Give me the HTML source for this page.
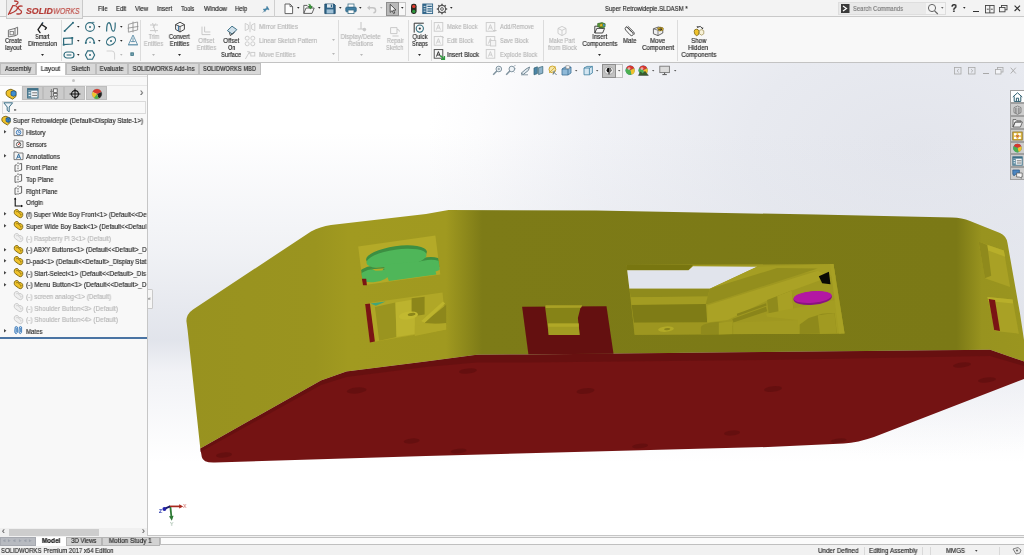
<!DOCTYPE html>
<html><head><meta charset="utf-8"><title>SOLIDWORKS</title>
<style>
*{margin:0;padding:0;box-sizing:border-box}
html,body{width:1024px;height:555px;overflow:hidden;background:#fff;font-family:"Liberation Sans",sans-serif;font-size:7px;color:#2a2a2a}
.a{position:absolute}
.t{position:absolute;white-space:nowrap;font-size:7px;line-height:9px;transform:scaleX(.9);transform-origin:0 50%}
.c{position:absolute;white-space:nowrap;font-size:7px;line-height:7.5px;text-align:center;transform:scaleX(.9);transform-origin:50% 50%}
.i{font-style:italic}
.t{-webkit-text-stroke:.18px currentColor;will-change:transform}
svg{position:absolute;overflow:visible}
</style></head><body>
<!-- viewport background -->
<div class="a" id="vp" style="left:148px;top:62px;width:876px;height:474px;background:linear-gradient(to bottom,rgba(222,225,233,0) 0,rgba(222,225,233,0) 70px,rgba(222,225,233,.45) 190px,rgba(222,225,233,.9) 278px,rgba(232,234,240,.6) 310px,rgba(255,255,255,0) 400px),radial-gradient(ellipse 490px 310px at 770px 85px,#e3e5ec 0%,#e8eaf0 35%,#f2f3f7 68%,#fcfcfd 90%,#fff 100%)"></div>
<!-- MODEL -->
<svg id="model" class="a" style="left:0;top:0" width="1024" height="555" viewBox="0 0 1024 555">
<defs>
<linearGradient id="gy" gradientUnits="userSpaceOnUse" x1="180" y1="0" x2="1024" y2="0">
<stop offset="0" stop-color="#98921f"/>
<stop offset="0.16" stop-color="#9a941f"/>
<stop offset="0.2" stop-color="#a19a20"/>
<stop offset="0.315" stop-color="#a09920"/>
<stop offset="0.358" stop-color="#7d7b17"/>
<stop offset="0.92" stop-color="#7b7916"/>
<stop offset="0.95" stop-color="#98931f"/>
<stop offset="1" stop-color="#9a951f"/>
</linearGradient>
</defs>
<!-- red base -->
<path d="M200.3 448.5 L321 380.4 L346.5 371.6 L426 361.5 L477 354.8 L528 354.5 L768 352 L990 349.7 L1024 361.5 L1024 379 L874 437 Q858 442.5 843.7 443.5 L768 447 L426 456 L215 462.5 Q203 463 201.8 457 Z" fill="#741313"/>
<!-- yellow body -->
<path d="M186.4 321 Q186.4 314 193 309.5 L311 231.5 Q320 226.5 331 225 L426 214 L448.5 210 L596 210.6 L816 214.6 L952 217.4 Q962 217.6 970 221 L1000 233 Q1006.5 236 1007.5 243 L1020 313.5 L1024 340 L1024 361.5 L990 349.7 L768 352 L528 354.5 L477 354.8 L426 361.5 L346.5 371.6 L321 380.4 L200.3 448.5 L187.6 330 Z" fill="url(#gy)"/>

<path d="M321 380.4 L346.5 371.6 L426 361.5 L477 354.8 L528 354.5 L768 352 L990 349.7 L1024 361.5 L1024 366 L990 356 L768 360 L528 362.5 L477 362.5 L426 367 L346.5 377 L321 385 L200.3 452 L200.3 448.5 Z" fill="#5f0f0f" opacity=".6"/>
<ellipse cx="468" cy="371" rx="9" ry="2.6" fill="#5a0d0d" opacity=".55" transform="rotate(-6 468 371)"/>
<ellipse cx="585.5" cy="391" rx="9" ry="2.8" fill="#5a0d0d" opacity=".55" transform="rotate(-6 585.5 391)"/>
<ellipse cx="773" cy="389" rx="9" ry="2.8" fill="#5a0d0d" opacity=".55" transform="rotate(-6 773 389)"/>
<ellipse cx="732" cy="433" rx="8" ry="2.5" fill="#5a0d0d" opacity=".55" transform="rotate(-6 732 433)"/>
<ellipse cx="640" cy="446" rx="8" ry="2.3" fill="#5a0d0d" opacity=".55" transform="rotate(-6 640 446)"/>
<ellipse cx="458.6" cy="451" rx="8" ry="2.3" fill="#5a0d0d" opacity=".55" transform="rotate(-6 458.6 451)"/>
<ellipse cx="411.7" cy="441" rx="8" ry="2.5" fill="#5a0d0d" opacity=".55" transform="rotate(-6 411.7 441)"/>
<ellipse cx="356.6" cy="390.5" rx="10" ry="3" fill="#5a0d0d" opacity=".55" transform="rotate(-6 356.6 390.5)"/>
<ellipse cx="224" cy="455" rx="8" ry="2.6" fill="#5a0d0d" opacity=".55" transform="rotate(-6 224 455)"/>
<ellipse cx="962" cy="365" rx="9" ry="2.5" fill="#5a0d0d" opacity=".55" transform="rotate(-6 962 365)"/>
<ellipse cx="987" cy="380" rx="9" ry="2.5" fill="#5a0d0d" opacity=".55" transform="rotate(-6 987 380)"/>
<ellipse cx="838.6" cy="440.5" rx="8" ry="2" fill="#5a0d0d" opacity=".55" transform="rotate(-6 838.6 440.5)"/>
<polygon points="358.2,246.4 435.4,235.6 440.3,274.5 363.0,285.3" fill="#b4aa28" />
<clipPath id="cw1"><polygon points="358.2,246.4 435.4,235.6 440.3,274.5 363.0,285.3"/></clipPath><g clip-path="url(#cw1)">
<ellipse cx="396.5" cy="255.7" rx="30.7" ry="9.5" fill="#3c8f42" transform="rotate(-8 396.5 255.7)" />
<ellipse cx="427.8" cy="263.7" rx="15.1" ry="6.5" fill="#3c8f42" transform="rotate(-6 427.8 263.7)" />
<ellipse cx="373.8" cy="272.3" rx="14.7" ry="6.5" fill="#3c8f42" transform="rotate(-6 373.8 272.3)" />
<ellipse cx="396.5" cy="258.7" rx="30.3" ry="9.1" fill="#4fb659" transform="rotate(-8 396.5 258.7)" />
<ellipse cx="428.2" cy="266.5" rx="15.1" ry="6.5" fill="#4fb659" transform="rotate(-6 428.2 266.5)" />
<ellipse cx="374.2" cy="275.5" rx="14.7" ry="6.5" fill="#4fb659" transform="rotate(-6 374.2 275.5)" />
<polygon points="382.4,264.7 432.1,260.4 436.4,274.5 388.9,281.0" fill="#4fb659" />
<polygon points="370.5,268.2 384.6,266.9 382.4,270.4 375.5,270.8" fill="#b4aa28" />
<polygon points="370.5,268.2 384.6,266.9 384.1,268.2 371.6,269.3" fill="#3c8f42" />
</g>
<polygon points="361.9,278.8 366.2,278.8 366.9,285.3 363.0,285.3" fill="#7a1414" />
<polygon points="365.1,303.6 442.5,292.4 446.2,329.6 369.9,342.5" fill="#b0a727" />
<polygon points="374.9,306.9 395.4,302.6 396.5,337.1 379.2,340.8" fill="#9a941f" />
<polygon points="395.4,302.6 414.8,299.3 414.8,333.9 396.5,337.1" fill="#bcb32e" />
<polygon points="411.6,298.2 424.6,296.7 424.6,314.4 411.6,316.6" fill="#8c861a" />
<polygon points="423.5,323.1 446.2,304.7 446.2,324.2" fill="#8d871b" />
<polygon points="414.8,325.7 446.2,323.1 446.2,329.6 414.8,336.1" fill="#b0a727" />
<polygon points="421.3,320.9 442.9,301.5 445.1,303.6 424.6,323.1" fill="#bdb42d" />
<ellipse cx="408.4" cy="315.5" rx="9.7" ry="3.9" fill="#c2b930" transform="rotate(-8 408.4 315.5)" />
<ellipse cx="411.6" cy="314.4" rx="3.9" ry="1.5" fill="#8c861a" transform="rotate(-8 411.6 314.4)" />
<polygon points="365.1,304.1 369.9,303.6 374.9,341.5 369.9,342.5" fill="#7a1414" />
<polygon points="370.5,303.6 385.7,301.5 375.9,305.8" fill="#3fa57a" />
<polygon points="522.1,306.7 606.5,306.2 613.5,353.7 528.4,354.3" fill="#641010" />
<polygon points="544.9,305.4 582.4,305.2 580.5,307.7 577.9,317.9 579.6,335.0 548.7,335.0" fill="#868317" />
<polygon points="545.5,305.2 582.1,305.2 581.1,307.7 545.8,307.9" fill="#a9a125" />
<polygon points="547.8,323.6 578.6,323.6 579.6,335.0 548.7,335.0" fill="#a29b22" />
<polygon points="548.1,323.6 578.6,323.6 578.7,326.7 548.2,326.7" fill="#b0a827" />
<polygon points="626.7,265.1 833.4,264.0 844.6,333.6 634.6,334.7" fill="#9f9821" />
<polygon points="626.7,265.1 693.0,265.1 688.5,270.3 627.2,270.3" fill="#787610" />
<polygon points="627.2,270.3 688.5,270.3 693.0,266.2 757.0,266.7 709.8,288.7 629.4,288.7" fill="#e1e4ec" />
<polygon points="629.4,288.7 709.8,288.7 707.6,296.6 630.8,297.2" fill="#8f8b1c" />
<polygon points="630.8,297.2 707.6,296.6 705.8,304.0 631.7,304.9" fill="#a39c22" />
<polygon points="631.7,304.9 705.8,304.0 707.2,322.4 633.9,322.8" fill="#7f7c16" />
<polygon points="633.9,322.8 707.2,322.4 732.3,320.1 733.4,334.1 634.8,334.7" fill="#9d9620" />
<polygon points="757.0,266.7 833.4,264.0 835.6,277.5 817.7,270.7 709.8,288.7" fill="#a59e23" />
<polygon points="709.8,288.7 777.2,268.0 817.7,268.5 707.6,304.0 705.8,304.0" fill="#938e1d" />
<polygon points="707.2,305.5 817.7,270.7 831.1,276.3 790.7,290.9 766.0,301.0 727.8,320.1 707.2,322.4" fill="#aaa225" />
<polygon points="732.3,319.0 766.0,306.7 767.1,311.2 733.4,322.4" fill="#8a851a" />
<polygon points="736.8,313.8 766.0,303.3 766.5,305.5 737.3,316.1" fill="#8a851a" />
<polygon points="767.1,299.9 791.8,290.5 793.4,310.0 768.7,313.8" fill="#8f8a1c" />
<polygon points="777.2,296.1 791.8,290.5 793.4,310.0 778.6,312.3" fill="#a8a024" />
<polygon points="733.4,322.4 799.7,320.1 799.7,334.1 733.4,334.1" fill="#a29b22" />
<polygon points="766.0,313.8 835.6,299.9 841.2,333.6 799.7,334.1 797.4,320.1 767.1,316.8" fill="#a49d22" />
<path d="M799.7,334.1 L799.7,324.6 L808.7,317.9 L822.2,313.8 L834.5,313.0 L836.8,333.6 Z" fill="#8e891b"/>
<polygon points="817.7,315.2 834.5,313.0 836.8,333.6 819.9,334.1" fill="#a19a21" />
<ellipse cx="716.6" cy="326.9" rx="15.7" ry="4.9" fill="#8f8a1c" transform="rotate(-3 716.6 326.9)" />
<polygon points="700.9,326.9 732.3,326.0 732.3,334.1 700.9,334.5" fill="#8f8a1c" />
<polygon points="718.8,322.4 732.3,321.5 732.3,334.1 718.8,334.5" fill="#a49d22" />
<ellipse cx="666.0" cy="329.1" rx="7.9" ry="2.7" fill="#b1a927" transform="rotate(-5 666.0 329.1)" />
<ellipse cx="667.2" cy="329.1" rx="3.1" ry="1.1" fill="#8a851a" transform="rotate(-5 667.2 329.1)" />
<polygon points="830.0,264.0 833.4,264.0 844.6,333.6 839.0,333.6" fill="#a8a124" />
<polygon points="818.8,276.3 828.9,271.8 830.5,284.2 822.2,283.3" fill="#0a0a05" />
<ellipse cx="812.7" cy="298.1" rx="19.3" ry="6.7" fill="#8a1380" transform="rotate(-5 812.7 298.1)" />
<ellipse cx="812.7" cy="297.0" rx="19.1" ry="5.8" fill="#b318a3" transform="rotate(-5 812.7 297.0)" />
<polygon points="978.6,241.6 1003.8,250.4 1010.1,287.0 984.9,278.2" fill="#a9a125" />
<polygon points="978.6,241.6 987.4,244.9 991.2,275.7 984.9,278.2" fill="#8f8a1c" />
<polygon points="987.4,244.9 1003.8,250.4 1005.1,256.7 988.2,250.4" fill="#b8af2a" />
<polygon points="987.4,297.1 1012.6,299.6 1018.9,333.7 995.0,331.1" fill="#a9a125" />
<polygon points="987.4,297.1 1012.6,299.6 1013.1,303.4 988.2,300.9" fill="#b8af2a" />
<polygon points="988.7,298.9 995.0,299.9 1000.0,331.1 994.2,330.1" fill="#7a1414" />
</svg>
<!-- title bar -->
<div class="a" style="left:0;top:0;width:1024px;height:17px;background:#f3f3f3"></div>
<!-- ribbon -->
<div class="a" style="left:0;top:16px;width:1024px;height:47px;background:#f8f8f8;border-top:1px solid #c9c9c9;border-bottom:1px solid #c9c9c9"></div>
<!-- tab row -->
<div class="a" id="tabs" style="left:0;top:63px;width:1024px;height:12px"></div>
<!-- left panel -->
<div class="a" id="panel" style="left:0;top:75px;width:148px;height:460px;background:#f7f7f7;border-right:1px solid #c8c8c8"></div>
<!-- bottom tabs -->
<div class="a" id="btabs" style="left:0;top:535px;width:1024px;height:10px;background:#f3f3f3;border-top:1px solid #c6c6c6"></div>
<!-- status -->
<div class="a" id="status" style="left:0;top:545px;width:1024px;height:10px;background:#f1f1f1;border-top:1px solid #d0d0d0"></div>
<!--CHROME-->
<div class="a" style="left:5.5px;top:0px;width:77.5px;height:18.5px;background:#ececec;border:1px solid #c9c9c9;border-top:none;"></div>
<svg style="left:7.3px;top:0.6px" width="18" height="15" viewBox="0 0 18 15"><path d="M1.5 13.4 L5.9 4.7 Q9.6 4.2 10.4 6.4 Q11 9.8 3.2 12.6 M7.6 0 Q11.4 .2 11 1.8 Q10.6 3 9.2 3.4 M15.1 5.1 Q11.6 4.6 11.2 6.4 Q11 8 13 9 Q15.4 10.2 14 12.2 Q12.6 13.4 9.8 12.8" fill="none" stroke="#b53c37" stroke-width="1.3" stroke-linecap="round"/></svg>
<span class="t i" style="left:26.0px;top:6.7px;transform:scaleX(1.044);color:#b53c37;font-weight:bold;font-size:8.4px">SOLID</span>
<span class="t i" style="left:52.8px;top:6.7px;transform:scaleX(0.844);color:#c0524c;font-size:8.4px">WORKS</span>
<span class="t " style="left:97.7px;top:3.9px;transform:scaleX(0.851);color:#2b2b2b">File</span>
<span class="t " style="left:116.0px;top:3.9px;transform:scaleX(0.854);color:#2b2b2b">Edit</span>
<span class="t " style="left:134.9px;top:3.9px;transform:scaleX(0.877);color:#2b2b2b">View</span>
<span class="t " style="left:156.8px;top:3.9px;transform:scaleX(0.868);color:#2b2b2b">Insert</span>
<span class="t " style="left:181.0px;top:3.9px;transform:scaleX(0.820);color:#2b2b2b">Tools</span>
<span class="t " style="left:203.5px;top:3.9px;transform:scaleX(0.928);color:#2b2b2b">Window</span>
<span class="t " style="left:235.4px;top:3.9px;transform:scaleX(0.861);color:#2b2b2b">Help</span>
<div class="a" style="left:274px;top:0px;width:1px;height:17px;background:#cfcfcf;"></div>
<span class="t " style="left:605.0px;top:3.9px;transform:scaleX(0.852);color:#2b2b2b">Super Retrowidepie.SLDASM *</span>
<div class="a" style="left:837.5px;top:2px;width:108.5px;height:13px;background:#e9e9e9;border:1px solid #dedede;"></div>
<div class="a" style="left:926px;top:3px;width:19px;height:11px;background:#f4f4f4;"></div>
<span class="t " style="left:852.5px;top:3.7px;transform:scaleX(0.835);color:#7d7d7d">Search Commands</span>
<span class="t " style="left:2.7px;top:36.0px;transform:scaleX(0.809);transform-origin:50% 50%;color:#2b2b2b">Create</span>
<span class="t " style="left:3.9px;top:43.0px;transform:scaleX(0.878);transform-origin:50% 50%;color:#2b2b2b">layout</span>
<span class="t " style="left:33.2px;top:32.0px;transform:scaleX(0.750);transform-origin:50% 50%;color:#2b2b2b">Smart</span>
<span class="t " style="left:26.0px;top:39.0px;transform:scaleX(0.877);transform-origin:50% 50%;color:#2b2b2b">Dimension</span>
<span class="t " style="left:146.6px;top:32.0px;transform:scaleX(0.765);transform-origin:50% 50%;color:#b8b8b8">Trim</span>
<span class="t " style="left:142.0px;top:39.0px;transform:scaleX(0.850);transform-origin:50% 50%;color:#b8b8b8">Entities</span>
<span class="t " style="left:167.2px;top:32.0px;transform:scaleX(0.857);transform-origin:50% 50%;color:#2b2b2b">Convert</span>
<span class="t " style="left:168.0px;top:39.0px;transform:scaleX(0.850);transform-origin:50% 50%;color:#2b2b2b">Entities</span>
<span class="t " style="left:196.7px;top:36.0px;transform:scaleX(0.863);transform-origin:50% 50%;color:#b8b8b8">Offset</span>
<span class="t " style="left:194.5px;top:43.0px;transform:scaleX(0.850);transform-origin:50% 50%;color:#b8b8b8">Entities</span>
<span class="t " style="left:222.2px;top:36.0px;transform:scaleX(0.863);transform-origin:50% 50%;color:#2b2b2b">Offset</span>
<span class="t " style="left:226.8px;top:43.0px;transform:scaleX(0.750);transform-origin:50% 50%;color:#2b2b2b">On</span>
<span class="t " style="left:219.4px;top:50.0px;transform:scaleX(0.829);transform-origin:50% 50%;color:#2b2b2b">Surface</span>
<span class="t " style="left:259.0px;top:21.5px;transform:scaleX(0.903);color:#b8b8b8">Mirror Entities</span>
<span class="t " style="left:259.0px;top:35.5px;transform:scaleX(0.862);color:#b8b8b8">Linear Sketch Pattern</span>
<span class="t " style="left:259.0px;top:49.5px;transform:scaleX(0.869);color:#b8b8b8">Move Entities</span>
<span class="t " style="left:338.4px;top:32.0px;transform:scaleX(0.886);transform-origin:50% 50%;color:#b8b8b8">Display/Delete</span>
<span class="t " style="left:346.4px;top:39.0px;transform:scaleX(0.857);transform-origin:50% 50%;color:#b8b8b8">Relations</span>
<span class="t " style="left:384.7px;top:36.0px;transform:scaleX(0.824);transform-origin:50% 50%;color:#b8b8b8">Repair</span>
<span class="t " style="left:384.3px;top:43.0px;transform:scaleX(0.818);transform-origin:50% 50%;color:#b8b8b8">Sketch</span>
<span class="t " style="left:410.6px;top:32.0px;transform:scaleX(0.838);transform-origin:50% 50%;color:#2b2b2b">Quick</span>
<span class="t " style="left:409.6px;top:39.0px;transform:scaleX(0.806);transform-origin:50% 50%;color:#2b2b2b">Snaps</span>
<span class="t " style="left:447.0px;top:21.5px;transform:scaleX(0.843);color:#b8b8b8">Make Block</span>
<span class="t " style="left:447.0px;top:35.5px;transform:scaleX(0.851);color:#b8b8b8">Edit Block</span>
<span class="t " style="left:447.0px;top:49.5px;transform:scaleX(0.875);color:#2b2b2b">Insert Block</span>
<span class="t " style="left:499.5px;top:21.5px;transform:scaleX(0.840);color:#b8b8b8">Add/Remove</span>
<span class="t " style="left:499.5px;top:35.5px;transform:scaleX(0.814);color:#b8b8b8">Save Block</span>
<span class="t " style="left:499.5px;top:49.5px;transform:scaleX(0.845);color:#b8b8b8">Explode Block</span>
<span class="t " style="left:546.1px;top:36.0px;transform:scaleX(0.815);transform-origin:50% 50%;color:#b8b8b8">Make Part</span>
<span class="t " style="left:545.5px;top:43.0px;transform:scaleX(0.877);transform-origin:50% 50%;color:#b8b8b8">from Block</span>
<span class="t " style="left:590.7px;top:32.0px;transform:scaleX(0.857);transform-origin:50% 50%;color:#2b2b2b">Insert</span>
<span class="t " style="left:579.7px;top:39.0px;transform:scaleX(0.882);transform-origin:50% 50%;color:#2b2b2b">Components</span>
<span class="t " style="left:621.7px;top:36.0px;transform:scaleX(0.868);transform-origin:50% 50%;color:#2b2b2b">Mate</span>
<span class="t " style="left:649.4px;top:36.0px;transform:scaleX(0.876);transform-origin:50% 50%;color:#2b2b2b">Move</span>
<span class="t " style="left:639.9px;top:43.0px;transform:scaleX(0.884);transform-origin:50% 50%;color:#2b2b2b">Component</span>
<span class="t " style="left:689.7px;top:36.0px;transform:scaleX(0.857);transform-origin:50% 50%;color:#2b2b2b">Show</span>
<span class="t " style="left:687.4px;top:43.0px;transform:scaleX(0.902);transform-origin:50% 50%;color:#2b2b2b">Hidden</span>
<span class="t " style="left:678.7px;top:50.0px;transform:scaleX(0.882);transform-origin:50% 50%;color:#2b2b2b">Components</span>
<div class="a" style="left:61px;top:20px;width:1px;height:41px;background:#dcdcdc;"></div>
<div class="a" style="left:140.2px;top:20px;width:1px;height:41px;background:#dcdcdc;"></div>
<div class="a" style="left:337.7px;top:20px;width:1px;height:41px;background:#dcdcdc;"></div>
<div class="a" style="left:407.5px;top:20px;width:1px;height:41px;background:#dcdcdc;"></div>
<div class="a" style="left:431.4px;top:20px;width:1px;height:41px;background:#dcdcdc;"></div>
<div class="a" style="left:542.8px;top:20px;width:1px;height:41px;background:#dcdcdc;"></div>
<div class="a" style="left:677px;top:20px;width:1px;height:41px;background:#dcdcdc;"></div>
<svg style="left:41.0px;top:53.9875px" width="3.0" height="2.0250000000000004" viewBox="0 0 3.0 2.0250000000000004"><polygon points="0,0 3.0,0 1.5,2.0250000000000004" fill="#2b2b2b"/></svg>
<svg style="left:152.0px;top:53.9875px" width="3.0" height="2.0250000000000004" viewBox="0 0 3.0 2.0250000000000004"><polygon points="0,0 3.0,0 1.5,2.0250000000000004" fill="#b8b8b8"/></svg>
<svg style="left:178.0px;top:53.9875px" width="3.0" height="2.0250000000000004" viewBox="0 0 3.0 2.0250000000000004"><polygon points="0,0 3.0,0 1.5,2.0250000000000004" fill="#2b2b2b"/></svg>
<svg style="left:359.5px;top:53.9875px" width="3.0" height="2.0250000000000004" viewBox="0 0 3.0 2.0250000000000004"><polygon points="0,0 3.0,0 1.5,2.0250000000000004" fill="#b8b8b8"/></svg>
<svg style="left:418.0px;top:53.9875px" width="3.0" height="2.0250000000000004" viewBox="0 0 3.0 2.0250000000000004"><polygon points="0,0 3.0,0 1.5,2.0250000000000004" fill="#2b2b2b"/></svg>
<svg style="left:598.0px;top:53.9875px" width="3.0" height="2.0250000000000004" viewBox="0 0 3.0 2.0250000000000004"><polygon points="0,0 3.0,0 1.5,2.0250000000000004" fill="#2b2b2b"/></svg>
<svg style="left:331.5px;top:38.9875px" width="3.0" height="2.0250000000000004" viewBox="0 0 3.0 2.0250000000000004"><polygon points="0,0 3.0,0 1.5,2.0250000000000004" fill="#b8b8b8"/></svg>
<svg style="left:331.5px;top:52.9875px" width="3.0" height="2.0250000000000004" viewBox="0 0 3.0 2.0250000000000004"><polygon points="0,0 3.0,0 1.5,2.0250000000000004" fill="#b8b8b8"/></svg>
<div class="a" style="left:0px;top:62.5px;width:260.5px;height:12.5px;background:#f3f3f3;"></div>
<div class="a" style="left:0px;top:63px;width:35.5px;height:11.5px;background:#d8d8d8;border:1px solid #bebebe;"></div>
<span class="t " style="left:2.6px;top:64.0px;transform:scaleX(0.873);transform-origin:50% 50%;color:#2b2b2b">Assembly</span>
<div class="a" style="left:36px;top:62px;width:29.5px;height:13px;background:#ffffff;border:1px solid #c4c4c4;border-bottom:none;border-top:none;"></div>
<span class="t " style="left:40.2px;top:64.0px;transform:scaleX(0.928);transform-origin:50% 50%;color:#2b2b2b">Layout</span>
<div class="a" style="left:66px;top:63px;width:29.5px;height:11.5px;background:#d8d8d8;border:1px solid #bebebe;"></div>
<span class="t " style="left:70.1px;top:64.0px;transform:scaleX(0.865);transform-origin:50% 50%;color:#2b2b2b">Sketch</span>
<div class="a" style="left:96px;top:63px;width:31.5px;height:11.5px;background:#d8d8d8;border:1px solid #bebebe;"></div>
<span class="t " style="left:98.1px;top:64.0px;transform:scaleX(0.881);transform-origin:50% 50%;color:#2b2b2b">Evaluate</span>
<div class="a" style="left:128px;top:63px;width:70.5px;height:11.5px;background:#d8d8d8;border:1px solid #bebebe;"></div>
<span class="t " style="left:126.7px;top:64.0px;transform:scaleX(0.848);transform-origin:50% 50%;color:#2b2b2b">SOLIDWORKS Add-Ins</span>
<div class="a" style="left:199px;top:63px;width:61.5px;height:11.5px;background:#d8d8d8;border:1px solid #bebebe;"></div>
<span class="t " style="left:197.3px;top:64.0px;transform:scaleX(0.816);transform-origin:50% 50%;color:#2b2b2b">SOLIDWORKS MBD</span>
<div class="a" style="left:0px;top:61.5px;width:1024px;height:1px;background:#c3c3c3;"></div>
<div class="a" style="left:0px;top:75px;width:147.5px;height:461px;background:#f8f8f8;"></div>
<div class="a" style="left:147.4px;top:75px;width:1px;height:461px;background:#c6c6c6;"></div>
<div class="a" style="left:0px;top:75.5px;width:147px;height:1px;background:#e3e3e3;"></div>
<div class="a" style="left:0px;top:85px;width:147px;height:1px;background:#e6e6e6;"></div>
<div class="a" style="left:72px;top:79px;width:2.5px;height:2.5px;background:#c4c4c4;border-radius:2px;"></div>
<div class="a" style="left:0px;top:86px;width:21px;height:14.5px;background:#fdfdfd;"></div>
<div class="a" style="left:21.5px;top:86px;width:21px;height:14px;background:#cbcbcb;border:1px solid #bdbdbd;"></div>
<div class="a" style="left:43px;top:86px;width:20.5px;height:14px;background:#cbcbcb;border:1px solid #bdbdbd;"></div>
<div class="a" style="left:64px;top:86px;width:20.5px;height:14px;background:#cbcbcb;border:1px solid #bdbdbd;"></div>
<div class="a" style="left:85.5px;top:86px;width:21px;height:14px;background:#cbcbcb;border:1px solid #bdbdbd;"></div>
<div class="a" style="left:1.5px;top:100.5px;width:144.5px;height:13px;background:#f8f8f8;border:1px solid #dadada;"></div>
<span class="t " style="left:140.0px;top:88.0px;transform:scaleX(0.875);color:#555;font-size:11px">›</span>
<svg style="left:4px;top:130.39999999999998px" width="2.4" height="3.6" viewBox="0 0 2.4 3.6"><polygon points="0,0 2.4,1.8 0,3.6" fill="#444"/></svg>
<svg style="left:4px;top:153.89999999999998px" width="2.4" height="3.6" viewBox="0 0 2.4 3.6"><polygon points="0,0 2.4,1.8 0,3.6" fill="#444"/></svg>
<svg style="left:4px;top:212.39999999999998px" width="2.4" height="3.6" viewBox="0 0 2.4 3.6"><polygon points="0,0 2.4,1.8 0,3.6" fill="#444"/></svg>
<svg style="left:4px;top:224.1px" width="2.4" height="3.6" viewBox="0 0 2.4 3.6"><polygon points="0,0 2.4,1.8 0,3.6" fill="#444"/></svg>
<svg style="left:4px;top:247.5px" width="2.4" height="3.6" viewBox="0 0 2.4 3.6"><polygon points="0,0 2.4,1.8 0,3.6" fill="#444"/></svg>
<svg style="left:4px;top:259.2px" width="2.4" height="3.6" viewBox="0 0 2.4 3.6"><polygon points="0,0 2.4,1.8 0,3.6" fill="#444"/></svg>
<svg style="left:4px;top:270.9px" width="2.4" height="3.6" viewBox="0 0 2.4 3.6"><polygon points="0,0 2.4,1.8 0,3.6" fill="#444"/></svg>
<svg style="left:4px;top:282.59999999999997px" width="2.4" height="3.6" viewBox="0 0 2.4 3.6"><polygon points="0,0 2.4,1.8 0,3.6" fill="#444"/></svg>
<svg style="left:4px;top:329.4px" width="2.4" height="3.6" viewBox="0 0 2.4 3.6"><polygon points="0,0 2.4,1.8 0,3.6" fill="#444"/></svg>
<svg style="left:5px;top:87.5px" width="12" height="12" viewBox="0 0 12 12"><path d="M1 5 Q1 2.6 3.2 2 L6 1.2 L10.8 3.4 L11 8.4 L7.6 11.2 L2.6 8.4 Q1 7.2 1 5 Z" fill="#f0c22a" stroke="#7a6410" stroke-width=".9"/><path d="M6 3.6 L8.6 2.8 L11 3.8 L11 7.2 L8.6 8.4 L6 7.2 Z" fill="#3f8fd0" stroke="#1f4f7f" stroke-width=".7"/></svg>
<svg style="left:26.5px;top:88px" width="12" height="11" viewBox="0 0 12 11"><rect x=".6" y=".6" width="10.4" height="9.4" fill="#f4f7f9" stroke="#3d6f86" stroke-width="1"/><rect x=".6" y=".6" width="10.4" height="2" fill="#3d6f86"/><rect x="1" y="2.6" width="3.2" height="7.4" fill="#5f8ba0"/><path d="M1.6 4.8 H3.6 M1.6 7.4 H3.6" stroke="#fff" stroke-width="1"/><path d="M5.2 4.8 H10 M5.2 7.4 H10" stroke="#666" stroke-width=".9"/></svg>
<svg style="left:48.5px;top:87.5px" width="10" height="12" viewBox="0 0 10 12"><path d="M2.4 1 V11 M1 3.4 H4 M1 8.6 H4" stroke="#777" stroke-width=".9" fill="none"/><rect x="4.6" y=".8" width="3.6" height="3.6" fill="#f4f4f4" stroke="#555" stroke-width=".8"/><rect x="4.6" y="5.4" width="3.6" height="2.6" fill="#f4f4f4" stroke="#555" stroke-width=".8"/><circle cx="6.8" cy="9.6" r="1.5" fill="#f4f4f4" stroke="#555" stroke-width=".8"/></svg>
<svg style="left:68.5px;top:87.5px" width="12" height="12" viewBox="0 0 12 12"><circle cx="6" cy="6" r="3.4" fill="none" stroke="#111" stroke-width="1.1"/><path d="M6 .6 V11.4 M.6 6 H11.4" stroke="#111" stroke-width="1"/></svg>
<svg style="left:90.5px;top:87.5px" width="12" height="12" viewBox="0 0 12 12"><circle cx="6" cy="6" r="4.8" fill="#e9e9e9" stroke="#777" stroke-width=".6"/><path d="M6 6 L1.6 4 A4.8 4.8 0 0 1 10.4 4 Z" fill="#d7382c"/><path d="M6 6 L10.4 4 A4.8 4.8 0 0 1 7.6 10.5 Z" fill="#222"/><path d="M6 6 L7.6 10.5 A4.8 4.8 0 0 1 1.6 4 Z" fill="#f0c22a"/><path d="M6 6 L3 10 A4.8 4.8 0 0 0 7.6 10.5 Z" fill="#4caf50"/></svg>
<svg style="left:2.5px;top:102px" width="14" height="11" viewBox="0 0 14 11"><path d="M.8 .8 H9.6 L6.2 5 V9.8 L4.2 8.4 V5 Z" fill="#eef4f8" stroke="#3d6f86" stroke-width="1"/><rect x="11" y="7.4" width="2.2" height="1.1" fill="#333"/></svg>
<svg style="left:1.2px;top:115.0px" width="10" height="11" viewBox="0 0 10 11"><path d="M.8 4.4 Q.8 2.4 2.6 1.8 L5 1.2 L9 3 L9.2 7.4 L6.4 10 L2.2 7.4 Q.8 6.4 .8 4.4 Z" fill="#f0c22a" stroke="#7a6410" stroke-width=".9"/><path d="M5 3.2 L7.2 2.4 L9.2 3.4 L9.2 6.4 L7.2 7.4 L5 6.4 Z" fill="#3f8fd0" stroke="#1f4f7f" stroke-width=".7"/><path d="M5 3.2 L7.2 4.2 L9.2 3.4 M7.2 4.2 V7.4" fill="none" stroke="#1f4f7f" stroke-width=".6"/></svg>
<span class="t " style="left:13.1px;top:116.4px;transform:scaleX(0.892);color:#2b2b2b">Super Retrowidepie  (Default&lt;Display State-1&gt;)</span>
<svg style="left:13px;top:126.39999999999999px" width="11" height="11" viewBox="0 0 11 11"><path d="M1 2 H4.2 L5 3 H10 V9.6 H1 Z" fill="#f4f4f4" stroke="#6e6e6e" stroke-width=".9"/><circle cx="5.6" cy="6.4" r="2.3" fill="#dfeaf6" stroke="#3b78b8" stroke-width=".9"/><path d="M5.6 5 V6.5 H6.8" fill="none" stroke="#3b78b8" stroke-width=".7"/></svg>
<span class="t " style="left:25.8px;top:128.1px;transform:scaleX(0.895);color:#2b2b2b">History</span>
<svg style="left:13px;top:138.2px" width="11" height="11" viewBox="0 0 11 11"><path d="M1 2 H4.2 L5 3 H10 V9.6 H1 Z" fill="#f4f4f4" stroke="#6e6e6e" stroke-width=".9"/><circle cx="5.6" cy="6.4" r="2.2" fill="#fff" stroke="#555" stroke-width=".9"/><path d="M5.6 6.4 L6.8 5" stroke="#c0392b" stroke-width=".9"/><circle cx="5.6" cy="6.4" r=".7" fill="#c0392b"/></svg>
<span class="t " style="left:25.8px;top:139.9px;transform:scaleX(0.798);color:#2b2b2b">Sensors</span>
<svg style="left:13px;top:149.89999999999998px" width="11" height="11" viewBox="0 0 11 11"><path d="M1 2 H4.2 L5 3 H10 V9.6 H1 Z" fill="#f4f4f4" stroke="#6e6e6e" stroke-width=".9"/><path d="M3.6 8.8 L5.6 4 L7.6 8.8 M4.4 7.2 H6.8" fill="none" stroke="#2f6c9d" stroke-width="1"/></svg>
<span class="t " style="left:25.8px;top:151.6px;transform:scaleX(0.920);color:#2b2b2b">Annotations</span>
<svg style="left:13px;top:161.6px" width="11" height="11" viewBox="0 0 11 11"><path d="M2 3.2 L3.8 2.8 M2 3.2 V9.4 L3.8 9 M6.2 2 L8.6 1.4 V8 L6.2 8.6" fill="none" stroke="#555" stroke-width=".9"/><path d="M5 .4 V10.8" stroke="#555" stroke-width=".9" stroke-dasharray="1.6 1"/></svg>
<span class="t " style="left:25.8px;top:163.3px;transform:scaleX(0.871);color:#2b2b2b">Front Plane</span>
<svg style="left:13px;top:173.29999999999998px" width="11" height="11" viewBox="0 0 11 11"><path d="M2 3.2 L3.8 2.8 M2 3.2 V9.4 L3.8 9 M6.2 2 L8.6 1.4 V8 L6.2 8.6" fill="none" stroke="#555" stroke-width=".9"/><path d="M5 .4 V10.8" stroke="#555" stroke-width=".9" stroke-dasharray="1.6 1"/></svg>
<span class="t " style="left:25.8px;top:175.0px;transform:scaleX(0.883);color:#2b2b2b">Top Plane</span>
<svg style="left:13px;top:185.0px" width="11" height="11" viewBox="0 0 11 11"><path d="M2 3.2 L3.8 2.8 M2 3.2 V9.4 L3.8 9 M6.2 2 L8.6 1.4 V8 L6.2 8.6" fill="none" stroke="#555" stroke-width=".9"/><path d="M5 .4 V10.8" stroke="#555" stroke-width=".9" stroke-dasharray="1.6 1"/></svg>
<span class="t " style="left:25.8px;top:186.7px;transform:scaleX(0.870);color:#2b2b2b">Right Plane</span>
<svg style="left:13px;top:196.7px" width="11" height="11" viewBox="0 0 11 11"><path d="M2.2 1 V9 H9" fill="none" stroke="#111" stroke-width="1.1"/><path d="M1 2.6 L2.2 .6 L3.4 2.6 Z M8 7.8 L10.2 9 L8 10.2 Z" fill="#111"/></svg>
<span class="t " style="left:25.8px;top:198.4px;transform:scaleX(0.910);color:#2b2b2b">Origin</span>
<svg style="left:13px;top:208.39999999999998px" width="11" height="11" viewBox="0 0 11 11"><path d="M1.2 4.2 Q1 2.2 3 1.6 Q5 1 5.6 2.8 L5.8 3.6 Q8.6 3 9.6 5.2 Q10.4 7.6 8.8 9.2 Q7.2 10.4 5.6 9 L2.4 6.8 Q1.2 5.8 1.2 4.2 Z" fill="#f0c22a" stroke="#7a6410" stroke-width=".9"/><path d="M3.2 3.8 Q4.4 3 5.4 4.2 L7.6 6 Q8.4 6.8 7.8 7.6" fill="none" stroke="#7a6410" stroke-width=".8"/></svg>
<span class="t " style="left:25.8px;top:210.1px;transform:scaleX(0.906);color:#2b2b2b">(f) Super Wide Boy Front&lt;1&gt; (Default&lt;&lt;De</span>
<svg style="left:13px;top:220.1px" width="11" height="11" viewBox="0 0 11 11"><path d="M1.2 4.2 Q1 2.2 3 1.6 Q5 1 5.6 2.8 L5.8 3.6 Q8.6 3 9.6 5.2 Q10.4 7.6 8.8 9.2 Q7.2 10.4 5.6 9 L2.4 6.8 Q1.2 5.8 1.2 4.2 Z" fill="#f0c22a" stroke="#7a6410" stroke-width=".9"/><path d="M3.2 3.8 Q4.4 3 5.4 4.2 L7.6 6 Q8.4 6.8 7.8 7.6" fill="none" stroke="#7a6410" stroke-width=".8"/></svg>
<span class="t " style="left:25.8px;top:221.8px;transform:scaleX(0.892);color:#2b2b2b">Super Wide Boy Back&lt;1&gt; (Default&lt;&lt;Defaul</span>
<svg style="left:13px;top:231.79999999999998px" width="11" height="11" viewBox="0 0 11 11"><path d="M1.2 4.2 Q1 2.2 3 1.6 Q5 1 5.6 2.8 L5.8 3.6 Q8.6 3 9.6 5.2 Q10.4 7.6 8.8 9.2 Q7.2 10.4 5.6 9 L2.4 6.8 Q1.2 5.8 1.2 4.2 Z" fill="#efefef" stroke="#c6c6c6" stroke-width=".9"/><path d="M3.2 3.8 Q4.4 3 5.4 4.2 L7.6 6 Q8.4 6.8 7.8 7.6" fill="none" stroke="#c6c6c6" stroke-width=".8"/></svg>
<span class="t " style="left:25.8px;top:233.5px;transform:scaleX(0.885);color:#b8b8b8">(-) Raspberry Pi 3&lt;1&gt; (Default)</span>
<svg style="left:13px;top:243.5px" width="11" height="11" viewBox="0 0 11 11"><path d="M1.2 4.2 Q1 2.2 3 1.6 Q5 1 5.6 2.8 L5.8 3.6 Q8.6 3 9.6 5.2 Q10.4 7.6 8.8 9.2 Q7.2 10.4 5.6 9 L2.4 6.8 Q1.2 5.8 1.2 4.2 Z" fill="#f0c22a" stroke="#7a6410" stroke-width=".9"/><path d="M3.2 3.8 Q4.4 3 5.4 4.2 L7.6 6 Q8.4 6.8 7.8 7.6" fill="none" stroke="#7a6410" stroke-width=".8"/></svg>
<span class="t " style="left:25.8px;top:245.2px;transform:scaleX(0.895);color:#2b2b2b">(-) ABXY Buttons&lt;1&gt; (Default&lt;&lt;Default&gt;_D</span>
<svg style="left:13px;top:255.2px" width="11" height="11" viewBox="0 0 11 11"><path d="M1.2 4.2 Q1 2.2 3 1.6 Q5 1 5.6 2.8 L5.8 3.6 Q8.6 3 9.6 5.2 Q10.4 7.6 8.8 9.2 Q7.2 10.4 5.6 9 L2.4 6.8 Q1.2 5.8 1.2 4.2 Z" fill="#f0c22a" stroke="#7a6410" stroke-width=".9"/><path d="M3.2 3.8 Q4.4 3 5.4 4.2 L7.6 6 Q8.4 6.8 7.8 7.6" fill="none" stroke="#7a6410" stroke-width=".8"/></svg>
<span class="t " style="left:25.8px;top:256.9px;transform:scaleX(0.904);color:#2b2b2b">D-pad&lt;1&gt; (Default&lt;&lt;Default&gt;_Display Stat</span>
<svg style="left:13px;top:266.9px" width="11" height="11" viewBox="0 0 11 11"><path d="M1.2 4.2 Q1 2.2 3 1.6 Q5 1 5.6 2.8 L5.8 3.6 Q8.6 3 9.6 5.2 Q10.4 7.6 8.8 9.2 Q7.2 10.4 5.6 9 L2.4 6.8 Q1.2 5.8 1.2 4.2 Z" fill="#f0c22a" stroke="#7a6410" stroke-width=".9"/><path d="M3.2 3.8 Q4.4 3 5.4 4.2 L7.6 6 Q8.4 6.8 7.8 7.6" fill="none" stroke="#7a6410" stroke-width=".8"/></svg>
<span class="t " style="left:25.8px;top:268.6px;transform:scaleX(0.906);color:#2b2b2b">(-) Start-Select&lt;1&gt; (Default&lt;&lt;Default&gt;_Dis</span>
<svg style="left:13px;top:278.59999999999997px" width="11" height="11" viewBox="0 0 11 11"><path d="M1.2 4.2 Q1 2.2 3 1.6 Q5 1 5.6 2.8 L5.8 3.6 Q8.6 3 9.6 5.2 Q10.4 7.6 8.8 9.2 Q7.2 10.4 5.6 9 L2.4 6.8 Q1.2 5.8 1.2 4.2 Z" fill="#f0c22a" stroke="#7a6410" stroke-width=".9"/><path d="M3.2 3.8 Q4.4 3 5.4 4.2 L7.6 6 Q8.4 6.8 7.8 7.6" fill="none" stroke="#7a6410" stroke-width=".8"/></svg>
<span class="t " style="left:25.8px;top:280.3px;transform:scaleX(0.923);color:#2b2b2b">(-) Menu Button&lt;1&gt; (Default&lt;&lt;Default&gt;_D</span>
<svg style="left:13px;top:290.3px" width="11" height="11" viewBox="0 0 11 11"><path d="M1.2 4.2 Q1 2.2 3 1.6 Q5 1 5.6 2.8 L5.8 3.6 Q8.6 3 9.6 5.2 Q10.4 7.6 8.8 9.2 Q7.2 10.4 5.6 9 L2.4 6.8 Q1.2 5.8 1.2 4.2 Z" fill="#efefef" stroke="#c6c6c6" stroke-width=".9"/><path d="M3.2 3.8 Q4.4 3 5.4 4.2 L7.6 6 Q8.4 6.8 7.8 7.6" fill="none" stroke="#c6c6c6" stroke-width=".8"/></svg>
<span class="t " style="left:25.8px;top:292.0px;transform:scaleX(0.907);color:#b8b8b8">(-) screen analog&lt;1&gt; (Default)</span>
<svg style="left:13px;top:302.0px" width="11" height="11" viewBox="0 0 11 11"><path d="M1.2 4.2 Q1 2.2 3 1.6 Q5 1 5.6 2.8 L5.8 3.6 Q8.6 3 9.6 5.2 Q10.4 7.6 8.8 9.2 Q7.2 10.4 5.6 9 L2.4 6.8 Q1.2 5.8 1.2 4.2 Z" fill="#efefef" stroke="#c6c6c6" stroke-width=".9"/><path d="M3.2 3.8 Q4.4 3 5.4 4.2 L7.6 6 Q8.4 6.8 7.8 7.6" fill="none" stroke="#c6c6c6" stroke-width=".8"/></svg>
<span class="t " style="left:25.8px;top:303.7px;transform:scaleX(0.920);color:#b8b8b8">(-) Shoulder Button&lt;3&gt; (Default)</span>
<svg style="left:13px;top:313.7px" width="11" height="11" viewBox="0 0 11 11"><path d="M1.2 4.2 Q1 2.2 3 1.6 Q5 1 5.6 2.8 L5.8 3.6 Q8.6 3 9.6 5.2 Q10.4 7.6 8.8 9.2 Q7.2 10.4 5.6 9 L2.4 6.8 Q1.2 5.8 1.2 4.2 Z" fill="#efefef" stroke="#c6c6c6" stroke-width=".9"/><path d="M3.2 3.8 Q4.4 3 5.4 4.2 L7.6 6 Q8.4 6.8 7.8 7.6" fill="none" stroke="#c6c6c6" stroke-width=".8"/></svg>
<span class="t " style="left:25.8px;top:315.4px;transform:scaleX(0.920);color:#b8b8b8">(-) Shoulder Button&lt;4&gt; (Default)</span>
<svg style="left:13px;top:325.4px" width="11" height="11" viewBox="0 0 11 11"><path d="M2.2 2 Q3.4 1 4.4 2 V7.4 Q3.4 9.6 2 8 Q1.4 7 2.2 2 Z M6.4 2 Q7.6 1 8.6 2 V7.4 Q7.6 9.6 6.2 8 Q5.6 7 6.4 2 Z" fill="#bcd6ee" stroke="#3b78b8" stroke-width=".9"/><path d="M3.3 3 V7 M7.5 3 V7" stroke="#3b78b8" stroke-width=".7"/></svg>
<span class="t " style="left:25.8px;top:327.1px;transform:scaleX(0.866);color:#2b2b2b">Mates</span>
<div class="a" style="left:0px;top:337.3px;width:147.4px;height:1.7px;background:#4a74a3;"></div>
<div class="a" style="left:148.2px;top:289.2px;width:4.5px;height:19.8px;background:#f6f6f6;border:1px solid #c9c9c9;border-left:none;border-radius:0 1.5px 1.5px 0;"></div>
<span class="t " style="left:148.3px;top:294.3px;transform:scaleX(0.875);color:#888;font-size:5px">«</span>
<div class="a" style="left:0px;top:528px;width:147px;height:8px;background:#f0f0f0;"></div>
<div class="a" style="left:9px;top:528.5px;width:89.5px;height:7px;background:#cdcdcd;"></div>
<span class="t " style="left:2.0px;top:526.8px;transform:scaleX(0.875);color:#444;font-size:9px">‹</span>
<span class="t " style="left:142.0px;top:526.8px;transform:scaleX(0.875);color:#444;font-size:9px">›</span>
<div class="a" style="left:0px;top:536px;width:1024px;height:10px;background:#f1f1f1;"></div>
<div class="a" style="left:159.5px;top:536.5px;width:864.5px;height:8.5px;background:#fbfbfb;border:1px solid #bfbfbf;border-right:none;"></div>
<div class="a" style="left:0px;top:536.5px;width:35.5px;height:9px;background:#b7bac0;border:1px solid #a6a9b0;"></div>
<div class="a" style="left:36px;top:536.5px;width:29.5px;height:9.5px;background:#ffffff;"></div>
<div class="a" style="left:66px;top:537px;width:35.5px;height:8.5px;background:#d2d2d2;border:1px solid #b5b5b5;"></div>
<div class="a" style="left:102px;top:537px;width:57.5px;height:8.5px;background:#d2d2d2;border:1px solid #b5b5b5;"></div>
<span class="t " style="left:40.6px;top:536.2px;transform:scaleX(0.915);transform-origin:50% 50%;color:#111;font-weight:bold">Model</span>
<span class="t " style="left:69.0px;top:536.2px;transform:scaleX(0.849);transform-origin:50% 50%;color:#2b2b2b">3D Views</span>
<span class="t " style="left:107.2px;top:536.2px;transform:scaleX(0.921);transform-origin:50% 50%;color:#2b2b2b">Motion Study 1</span>
<span class="t " style="left:3.0px;top:536.0px;transform:scaleX(0.875);color:#9aa0aa;font-size:5px">◂</span>
<span class="t " style="left:8.2px;top:536.0px;transform:scaleX(0.875);color:#9aa0aa;font-size:5px">▸</span>
<span class="t " style="left:13.4px;top:536.0px;transform:scaleX(0.875);color:#9aa0aa;font-size:5px">◂</span>
<span class="t " style="left:18.6px;top:536.0px;transform:scaleX(0.875);color:#9aa0aa;font-size:5px">▸</span>
<span class="t " style="left:23.8px;top:536.0px;transform:scaleX(0.875);color:#9aa0aa;font-size:5px">◂</span>
<span class="t " style="left:29.0px;top:536.0px;transform:scaleX(0.875);color:#9aa0aa;font-size:5px">▸</span>
<div class="a" style="left:0px;top:546px;width:1024px;height:9px;background:#f1f1f1;"></div>
<span class="t " style="left:0.5px;top:545.5px;transform:scaleX(0.856);color:#2b2b2b">SOLIDWORKS Premium 2017 x64 Edition</span>
<span class="t " style="left:818.4px;top:545.5px;transform:scaleX(0.897);color:#2b2b2b">Under Defined</span>
<span class="t " style="left:868.6px;top:545.5px;transform:scaleX(0.910);color:#2b2b2b">Editing Assembly</span>
<span class="t " style="left:946.0px;top:545.5px;transform:scaleX(0.873);color:#2b2b2b">MMGS</span>
<div class="a" style="left:864px;top:547px;width:1px;height:8px;background:#d9d9d9;"></div>
<div class="a" style="left:922px;top:547px;width:1px;height:8px;background:#d9d9d9;"></div>
<div class="a" style="left:930px;top:547px;width:1px;height:8px;background:#d9d9d9;"></div>
<div class="a" style="left:999px;top:547px;width:1px;height:8px;background:#d9d9d9;"></div>
<svg style="left:975.2px;top:549.9224999999999px" width="2.6" height="1.7550000000000001" viewBox="0 0 2.6 1.7550000000000001"><polygon points="0,0 2.6,0 1.3,1.7550000000000001" fill="#444"/></svg>
<svg style="left:1012px;top:546px" width="10" height="9" viewBox="0 0 10 9"><path d="M1 3 L6 1.5 L9 4 L8 7 L4 8 Z" fill="#e8e8e8" stroke="#666" stroke-width=".8"/><circle cx="5" cy="4.5" r="1" fill="#666"/></svg>
<svg style="left:954px;top:67px" width="8" height="8" viewBox="0 0 8 8"><rect x=".5" y=".5" width="6.5" height="6.5" fill="none" stroke="#a8a8a8" stroke-width=".8"/><path d="M4.8 2.2 L3 3.8 L4.8 5.4" fill="none" stroke="#a8a8a8" stroke-width=".8"/></svg>
<svg style="left:968px;top:67px" width="8" height="8" viewBox="0 0 8 8"><rect x=".5" y=".5" width="6.5" height="6.5" fill="none" stroke="#a8a8a8" stroke-width=".8"/><path d="M3 2.2 L4.8 3.8 L3 5.4" fill="none" stroke="#a8a8a8" stroke-width=".8"/></svg>
<div class="a" style="left:983px;top:72.5px;width:5.5px;height:1.3px;background:#a8a8a8;"></div>
<svg style="left:995px;top:67px" width="9" height="8" viewBox="0 0 9 8"><rect x="2.5" y=".5" width="5.5" height="4.5" fill="none" stroke="#a8a8a8" stroke-width=".8"/><rect x=".5" y="2.5" width="5.5" height="4.5" fill="#f4f5f8" stroke="#a8a8a8" stroke-width=".8"/></svg>
<svg style="left:1010px;top:67px" width="7" height="8" viewBox="0 0 7 8"><path d="M.7 .7 L5.8 6.5 M5.8 .7 L.7 6.5" stroke="#a8a8a8" stroke-width=".9"/></svg>
<div class="a" style="left:1009.5px;top:90.3px;width:15px;height:12.700000000000003px;background:#ffffff;border:1px solid #9f9f9f;"></div>
<svg style="left:1011.5px;top:91.8px" width="11" height="10" viewBox="0 0 11 10"><path d="M.8 5 L5.5 .8 L10.2 5 M2.2 4.4 V9.4 H8.8 V4.4 M4.4 9.4 V6.2 H6.6 V9.4" fill="#fff" stroke="#2f5f70" stroke-width="1"/></svg>
<div class="a" style="left:1009.5px;top:103px;width:15px;height:13px;background:#cdcdcd;border:1px solid #9f9f9f;"></div>
<svg style="left:1011.5px;top:104.5px" width="11" height="10" viewBox="0 0 11 10"><path d="M2 2.6 L5.6 1 L9 2.6 V7.6 L5.6 9.4 L2 7.6 Z M3.4 2.8 V8 M4.8 2.4 V8.8 M6.4 2.4 V8.8 M7.8 2.8 V8" fill="#e4e4e4" stroke="#666" stroke-width=".7"/></svg>
<div class="a" style="left:1009.5px;top:116px;width:15px;height:13px;background:#cdcdcd;border:1px solid #9f9f9f;"></div>
<svg style="left:1011.5px;top:117.5px" width="11" height="10" viewBox="0 0 11 10"><path d="M1 9 V1.6 H4 L5 2.8 H9 V4 H3.2 Z M1 9 L3.2 4 H10.4 L8.4 9 Z" fill="#f1f1f1" stroke="#555" stroke-width=".8"/></svg>
<div class="a" style="left:1009.5px;top:129px;width:15px;height:12.5px;background:#cdcdcd;border:1px solid #9f9f9f;"></div>
<svg style="left:1011.5px;top:130.5px" width="11" height="10" viewBox="0 0 11 10"><rect x=".8" y="1" width="9.4" height="8" fill="#e8c24a" stroke="#8a6d1a" stroke-width=".8"/><rect x="2" y="2.2" width="2.6" height="2.2" fill="#fff"/><rect x="6.2" y="2.2" width="2.6" height="2.2" fill="#fff"/><rect x="2" y="5.8" width="2.6" height="2.2" fill="#fff"/><rect x="6.2" y="5.8" width="2.6" height="2.2" fill="#fff"/><path d="M4 4 L7 6.4 M7 4 L4 6.4" stroke="#c0392b" stroke-width=".7"/></svg>
<div class="a" style="left:1009.5px;top:141.5px;width:15px;height:12.5px;background:#cdcdcd;border:1px solid #9f9f9f;"></div>
<svg style="left:1011.5px;top:143.0px" width="11" height="10" viewBox="0 0 11 10"><circle cx="5.5" cy="5" r="4.3" fill="#3d7fd0"/><path d="M5.5 5 L1.6 3.2 A4.3 4.3 0 0 1 9.4 3.2 Z" fill="#d7382c"/><path d="M5.5 5 L9.4 3.2 A4.3 4.3 0 0 1 6.6 9.2 Z" fill="#f0c22a"/><path d="M5.5 5 L6.6 9.2 A4.3 4.3 0 0 1 1.6 3.2 Z" fill="#4caf50"/></svg>
<div class="a" style="left:1009.5px;top:154px;width:15px;height:13px;background:#cdcdcd;border:1px solid #9f9f9f;"></div>
<svg style="left:1011.5px;top:155.5px" width="11" height="10" viewBox="0 0 11 10"><rect x=".8" y=".8" width="9.4" height="8.4" fill="#f4f7f9" stroke="#3d6f86" stroke-width=".9"/><rect x=".8" y=".8" width="9.4" height="1.8" fill="#3d6f86"/><rect x="1" y="2.6" width="2.8" height="6.4" fill="#5f8ba0"/><path d="M1.6 4.6 H3.2 M1.6 6.8 H3.2" stroke="#fff" stroke-width=".9"/><path d="M4.8 4.8 H9.4 M4.8 7 H9.4" stroke="#555" stroke-width=".8"/></svg>
<div class="a" style="left:1009.5px;top:167px;width:15px;height:12.5px;background:#cdcdcd;border:1px solid #9f9f9f;"></div>
<svg style="left:1011.5px;top:168.5px" width="11" height="10" viewBox="0 0 11 10"><path d="M.8 1 H7.4 V5.4 H3.4 L1.8 7 V5.4 H.8 Z" fill="#4d86c0" stroke="#2a5a8a" stroke-width=".7"/><path d="M4.6 4 H10.2 V8 H9.2 V9.4 L7.8 8 H4.6 Z" fill="#f4f4f4" stroke="#555" stroke-width=".7"/></svg>
<div class="a" style="left:601.5px;top:64px;width:14px;height:13.5px;background:#c2c2c2;border:1px solid #8f8f8f;"></div>
<div class="a" style="left:615.5px;top:64px;width:7px;height:13.5px;background:#f4f4f4;border:1px solid #c0c0c0;border-left:none;"></div>
<svg style="left:492px;top:65px" width="11" height="11" viewBox="0 0 11 11"><circle cx="6.8" cy="4" r="2.8" fill="#eef3f7" stroke="#7f929e" stroke-width="1"/><path d="M4.8 6 L1.2 9.8" stroke="#7f929e" stroke-width="1.5"/><path d="M5.6 4 H8 M6.8 2.8 V5.2" stroke="#6a7f8c" stroke-width=".6"/></svg>
<svg style="left:505px;top:65px" width="11" height="11" viewBox="0 0 11 11"><circle cx="6.8" cy="4" r="2.8" fill="#eef3f7" stroke="#7f929e" stroke-width="1"/><path d="M4.8 6 L1.2 9.8" stroke="#7f929e" stroke-width="1.5"/><path d="M9 1 L10.6 .4 M9.6 3.6 L10.8 3.8 M8.6 6.6 L9.6 7.6" stroke="#8a9aa5" stroke-width=".7"/></svg>
<svg style="left:519.5px;top:65px" width="11" height="11" viewBox="0 0 11 11"><path d="M1 8.4 L6 4 L9.6 2 L8.4 5.4 L3.4 9.4 Z" fill="#dfe8ee" stroke="#6a7f8c" stroke-width=".9"/><path d="M1 9.8 H8" stroke="#6a7f8c" stroke-width=".8"/></svg>
<svg style="left:533px;top:65px" width="11" height="11" viewBox="0 0 11 11"><path d="M1 3 L4.4 1.8 V8.6 L1 9.8 Z" fill="#4d86a8" stroke="#2f5f70" stroke-width=".7"/><path d="M5.6 2.6 L9.8 1.4 V8.2 L5.6 9.6 Z" fill="#8fb4cc" stroke="#2f5f70" stroke-width=".7"/></svg>
<svg style="left:546.5px;top:65px" width="11" height="11" viewBox="0 0 11 11"><circle cx="5.4" cy="4.4" r="3.4" fill="#f6e6a8" stroke="#c9a227" stroke-width=".9"/><path d="M2 8 L8.6 1.6" stroke="#c9a227" stroke-width=".8"/><path d="M6 6.4 L9.6 10 M7.6 5.6 L6 9.6" stroke="#6a7f8c" stroke-width="1"/></svg>
<svg style="left:561px;top:65px" width="11" height="11" viewBox="0 0 11 11"><path d="M1 4 L4 2 H10 V8 L7 10 H1 Z" fill="#8fb9d8" stroke="#3d6f96" stroke-width=".8"/><path d="M1 4 H7 V10 M7 4 L10 2" fill="none" stroke="#3d6f96" stroke-width=".8"/><rect x="5" y=".8" width="3.6" height="3" fill="#f4f4f4" stroke="#777" stroke-width=".5"/></svg>
<svg style="left:583px;top:65px" width="11" height="11" viewBox="0 0 11 11"><path d="M1 3 L4 1.4 H9.4 V8 L6.4 9.8 H1 Z" fill="#d4e6f2" stroke="#3d7f9f" stroke-width=".8"/><path d="M1 3 H6.4 V9.8 M6.4 3 L9.4 1.4" fill="none" stroke="#3d7f9f" stroke-width=".8"/></svg>
<svg style="left:603.5px;top:65px" width="11" height="11" viewBox="0 0 11 11"><ellipse cx="5" cy="5.6" rx="4.4" ry="3.6" fill="#e9e9e9" stroke="#888" stroke-width=".5"/><circle cx="5" cy="5.2" r="2.4" fill="#111"/><path d="M5 2.8 A2.4 2.4 0 0 1 5 7.6 Z" fill="#777"/><path d="M5 7.4 V9.4" stroke="#111" stroke-width="1"/></svg>
<svg style="left:625px;top:65px" width="11" height="11" viewBox="0 0 11 11"><circle cx="5.2" cy="5.2" r="4.6" fill="#3d7fd0"/><path d="M5.2 5.2 L1 3.2 A4.6 4.6 0 0 1 9.4 3.2 Z" fill="#d7382c"/><path d="M5.2 5.2 L9.4 3.2 A4.6 4.6 0 0 1 6.4 9.7 Z" fill="#f0c22a"/><path d="M5.2 5.2 L6.4 9.7 A4.6 4.6 0 0 1 1 3.2 Z" fill="#4caf50"/><circle cx="4" cy="3.6" r="1.4" fill="#fff" opacity=".55"/></svg>
<svg style="left:638px;top:65px" width="11" height="11" viewBox="0 0 11 11"><circle cx="5.2" cy="5.2" r="4.6" fill="#3d7fd0"/><path d="M5.2 5.2 L1 3.2 A4.6 4.6 0 0 1 9.4 3.2 Z" fill="#d7382c"/><path d="M5.2 5.2 L9.4 3.2 A4.6 4.6 0 0 1 6.4 9.7 Z" fill="#f0c22a"/><path d="M5.2 5.2 L6.4 9.7 A4.6 4.6 0 0 1 1 3.2 Z" fill="#4caf50"/><circle cx="4" cy="3.6" r="1.4" fill="#fff" opacity=".55"/><path d="M.4 10.4 L2.6 6.8 L4.6 9 L7 6.2 L10.4 10.4 Z" fill="#3a5f2a" stroke="#223" stroke-width=".4"/></svg>
<svg style="left:659px;top:65px" width="11" height="11" viewBox="0 0 11 11"><rect x=".8" y="1.2" width="9.6" height="6.4" fill="#dcdcdc" stroke="#777" stroke-width=".9"/><path d="M5.6 7.6 V9.2 M3.4 9.6 H7.8" stroke="#555" stroke-width="1"/></svg>
<svg style="left:574.8px;top:69.99px" width="2.4" height="1.62" viewBox="0 0 2.4 1.62"><polygon points="0,0 2.4,0 1.2,1.62" fill="#555"/></svg>
<svg style="left:596.3px;top:69.99px" width="2.4" height="1.62" viewBox="0 0 2.4 1.62"><polygon points="0,0 2.4,0 1.2,1.62" fill="#555"/></svg>
<svg style="left:617.8px;top:69.99px" width="2.4" height="1.62" viewBox="0 0 2.4 1.62"><polygon points="0,0 2.4,0 1.2,1.62" fill="#555"/></svg>
<svg style="left:652.3px;top:69.99px" width="2.4" height="1.62" viewBox="0 0 2.4 1.62"><polygon points="0,0 2.4,0 1.2,1.62" fill="#555"/></svg>
<svg style="left:673.8px;top:69.99px" width="2.4" height="1.62" viewBox="0 0 2.4 1.62"><polygon points="0,0 2.4,0 1.2,1.62" fill="#555"/></svg>
<div class="a" style="left:385.5px;top:2px;width:13.5px;height:13.5px;background:#b9b9b9;border:1px solid #8e8e8e;"></div>
<div class="a" style="left:399px;top:2px;width:7px;height:13.5px;background:#f7f7f7;border:1px solid #c5c5c5;border-left:none;"></div>
<svg style="left:261.5px;top:4.8px" width="8.5" height="8.5" viewBox="0 0 12 12"><path d="M6 1.6 L10 5.4 L8.8 6 L7.4 5.6 L5.4 7.8 L5.6 9 L4.8 9.6 L2 7 L2.8 6.2 L4 6.4 L6.2 4.2 L5.6 2.6 Z" fill="#3d86ad" stroke="#2a6484" stroke-width=".5" transform="rotate(15 6 6)"/><path d="M3.2 8.6 L1.2 10.6" stroke="#2a6484" stroke-width=".9"/></svg>
<svg style="left:283px;top:3px" width="12" height="12" viewBox="0 0 12 12"><path d="M2 1 H7 L9.6 3.6 V10.6 H2 Z" fill="#fdfdfd" stroke="#555" stroke-width=".9"/><path d="M7 1 V3.6 H9.6" fill="none" stroke="#555" stroke-width=".8"/></svg>
<svg style="left:303px;top:3px" width="12" height="12" viewBox="0 0 12 12"><path d="M.8 10.4 V2.4 H4 L5 3.6 H8.6 V5 M.8 10.4 L3 5 H11.2 L9 10.4 Z" fill="#f6f6f6" stroke="#555" stroke-width=".9"/><path d="M5.6 1.2 Q8 1 8.2 3.6 L9.4 3.4 L7.6 6 L5.4 4 L6.6 3.8 Q6.6 2.2 5.6 1.2 Z" fill="#3a9a3a" stroke="#1f6f1f" stroke-width=".4"/></svg>
<svg style="left:324px;top:3px" width="12" height="12" viewBox="0 0 12 12"><path d="M.8 1 H10 L11.2 2.2 V10.6 H.8 Z" fill="#2f6488" stroke="#1d4866" stroke-width=".8"/><rect x="3" y="1.2" width="6" height="3.4" fill="#dfe8ee"/><rect x="6.8" y="1.6" width="1.4" height="2.4" fill="#2f6488"/><rect x="2.6" y="6.4" width="6.8" height="4" fill="#9fc0d6"/></svg>
<svg style="left:345px;top:3px" width="12" height="12" viewBox="0 0 12 12"><rect x="3" y="1" width="6" height="3.4" fill="#fdfdfd" stroke="#3d6f86" stroke-width=".8"/><rect x=".8" y="4.2" width="10.4" height="4.6" rx=".8" fill="#3f7fa4" stroke="#2a5f80" stroke-width=".8"/><rect x="3" y="7" width="6" height="3.6" fill="#fdfdfd" stroke="#3d6f86" stroke-width=".8"/></svg>
<svg style="left:366px;top:3px" width="12" height="12" viewBox="0 0 12 12"><path d="M2.4 4.8 H6.6 Q9.6 4.8 9.6 7.4 Q9.6 9.6 7.4 9.8" fill="none" stroke="#c4c4c4" stroke-width="1.5"/><path d="M1 4.8 L3.8 2.4 V7.2 Z" fill="#c4c4c4"/></svg>
<svg style="left:387px;top:3px" width="12" height="12" viewBox="0 0 12 12"><path d="M3.2 1.4 V9.4 L5.2 7.6 L6.6 10.6 L7.8 10 L6.4 7.2 L9 7 Z" fill="#f4f4f4" stroke="#333" stroke-width=".8"/></svg>
<svg style="left:408px;top:3px" width="12" height="12" viewBox="0 0 12 12"><rect x="3" y=".8" width="5.6" height="10.2" rx="2.4" fill="#2a2a22"/><circle cx="5.8" cy="3.4" r="1.7" fill="#e03a2e"/><circle cx="5.8" cy="8.4" r="1.7" fill="#2e9a3e"/></svg>
<svg style="left:422px;top:3px" width="12" height="12" viewBox="0 0 12 12"><rect x=".8" y="1" width="9.8" height="9.6" fill="#e4edf3" stroke="#2f6488" stroke-width=".9"/><rect x=".8" y="1" width="3.6" height="9.6" fill="#2f6488"/><path d="M5.4 3.4 H9.8 M5.4 5.8 H9.8 M5.4 8.2 H9.8" stroke="#2f6488" stroke-width="1.2"/><path d="M1.6 3.4 H3.6 M1.6 5.8 H3.6 M1.6 8.2 H3.6" stroke="#e4edf3" stroke-width=".9"/></svg>
<svg style="left:435.5px;top:3px" width="12" height="12" viewBox="0 0 12 12"><circle cx="6" cy="6" r="3.6" fill="none" stroke="#555" stroke-width="1.1"/><circle cx="6" cy="6" r="1.4" fill="none" stroke="#555" stroke-width=".9"/><path d="M6 .8 V2.4 M6 9.6 V11.2 M.8 6 H2.4 M9.6 6 H11.2 M2.3 2.3 L3.5 3.5 M8.5 8.5 L9.7 9.7 M2.3 9.7 L3.5 8.5 M8.5 3.5 L9.7 2.3" stroke="#555" stroke-width="1.5"/></svg>
<svg style="left:296.7px;top:7.4225px" width="2.6" height="1.7550000000000001" viewBox="0 0 2.6 1.7550000000000001"><polygon points="0,0 2.6,0 1.3,1.7550000000000001" fill="#2b2b2b"/></svg>
<svg style="left:317.7px;top:7.4225px" width="2.6" height="1.7550000000000001" viewBox="0 0 2.6 1.7550000000000001"><polygon points="0,0 2.6,0 1.3,1.7550000000000001" fill="#2b2b2b"/></svg>
<svg style="left:338.7px;top:7.4225px" width="2.6" height="1.7550000000000001" viewBox="0 0 2.6 1.7550000000000001"><polygon points="0,0 2.6,0 1.3,1.7550000000000001" fill="#2b2b2b"/></svg>
<svg style="left:359.2px;top:7.4225px" width="2.6" height="1.7550000000000001" viewBox="0 0 2.6 1.7550000000000001"><polygon points="0,0 2.6,0 1.3,1.7550000000000001" fill="#2b2b2b"/></svg>
<svg style="left:380.2px;top:7.4225px" width="2.6" height="1.7550000000000001" viewBox="0 0 2.6 1.7550000000000001"><polygon points="0,0 2.6,0 1.3,1.7550000000000001" fill="#b8b8b8"/></svg>
<svg style="left:401.2px;top:7.4225px" width="2.6" height="1.7550000000000001" viewBox="0 0 2.6 1.7550000000000001"><polygon points="0,0 2.6,0 1.3,1.7550000000000001" fill="#2b2b2b"/></svg>
<svg style="left:449.7px;top:7.4225px" width="2.6" height="1.7550000000000001" viewBox="0 0 2.6 1.7550000000000001"><polygon points="0,0 2.6,0 1.3,1.7550000000000001" fill="#2b2b2b"/></svg>
<svg style="left:940.7px;top:7.4225px" width="2.6" height="1.7550000000000001" viewBox="0 0 2.6 1.7550000000000001"><polygon points="0,0 2.6,0 1.3,1.7550000000000001" fill="#666"/></svg>
<svg style="left:963.2px;top:7.4225px" width="2.6" height="1.7550000000000001" viewBox="0 0 2.6 1.7550000000000001"><polygon points="0,0 2.6,0 1.3,1.7550000000000001" fill="#2b2b2b"/></svg>
<svg style="left:841px;top:3.5px" width="8.5" height="9" viewBox="0 0 8.5 9"><rect width="8.5" height="9" fill="#3a3a3a"/><path d="M2 2 L5.5 4.5 L2 7" fill="none" stroke="#fff" stroke-width="1.2"/></svg>
<svg style="left:927px;top:2.5px" width="12" height="12" viewBox="0 0 12 12"><circle cx="5" cy="5" r="3.6" fill="none" stroke="#666" stroke-width="1"/><path d="M7.6 7.8 L10.8 11" stroke="#666" stroke-width="1.2"/></svg>
<span class="t " style="left:951.0px;top:3.6px;transform:scaleX(0.936);color:#222;font-weight:bold;font-size:10.5px">?</span>
<div class="a" style="left:973px;top:10.5px;width:5.5px;height:1.6px;background:#333;"></div>
<svg style="left:985px;top:4.5px" width="10" height="8.5" viewBox="0 0 10 8.5"><rect x=".5" y=".5" width="8.6" height="7.4" fill="none" stroke="#444" stroke-width=".9"/><path d="M4.8 .5 V8 M1.8 4.2 H3.8 M5.8 4.2 H7.8" stroke="#444" stroke-width=".9"/></svg>
<svg style="left:999px;top:4.5px" width="9" height="8" viewBox="0 0 9 8"><rect x="2.5" y=".5" width="5.5" height="4.3" fill="none" stroke="#444" stroke-width=".9"/><rect x=".5" y="2.5" width="5.5" height="4.3" fill="#f1f1f1" stroke="#444" stroke-width=".9"/></svg>
<svg style="left:1014px;top:5px" width="7" height="7" viewBox="0 0 7 7"><path d="M.6 .6 L6 6 M6 .6 L.6 6" stroke="#333" stroke-width="1.1"/></svg>
<svg style="left:6.8px;top:25.7px" width="12" height="12" viewBox="0 0 12 12"><path d="M1.4 4.2 L8 2.4 L10.6 1.2 V8.6 L8 9.8 L1.4 11 Z M8 2.4 V9.8" fill="#f3f3f3" stroke="#666" stroke-width=".9"/><rect x="3" y="5.4" width="3.6" height="3.4" fill="none" stroke="#666" stroke-width=".7"/></svg>
<svg style="left:36.3px;top:22px" width="12" height="12" viewBox="0 0 12 12"><path d="M2 7.6 L4 10.6 M2 7.6 L5.6 2.4 L10.4 5.8 M5.6 2.4 L6.6 1 M9.2 7.4 L10.4 5.8" fill="none" stroke="#1f1f1f" stroke-width="1.35" stroke-linecap="round"/><path d="M6.2 1.4 L7 .4" stroke="#2f6c9d" stroke-width="1"/></svg>
<svg style="left:62.5px;top:20.5px" width="12" height="12" viewBox="0 0 12 12"><path d="M1.6 10 L10 1.8" fill="none" stroke="#2f6c7d" stroke-width="1.2"/><circle cx="1.6" cy="10" r="1" fill="#2f6c7d"/><circle cx="10" cy="1.8" r="1" fill="#2f6c7d"/></svg>
<svg style="left:83.5px;top:20.5px" width="12" height="12" viewBox="0 0 12 12"><circle cx="6" cy="6" r="4.4" fill="none" stroke="#2f6c7d" stroke-width="1.1"/><circle cx="6" cy="6" r="1" fill="#2f6c7d"/><path d="M8 1.4 H10.4" stroke="#2f6c7d" stroke-width=".8"/></svg>
<svg style="left:105px;top:20.5px" width="12" height="12" viewBox="0 0 12 12"><path d="M1.6 10.4 Q1.6 1.4 4 1.6 Q5.6 2 6.2 6 Q6.8 10.2 8.4 10.2 Q10.4 10 10.2 1.4" fill="none" stroke="#2f6c7d" stroke-width="1.2"/></svg>
<svg style="left:126.5px;top:20.5px" width="12" height="12" viewBox="0 0 12 12"><path d="M1.4 3.4 L6 2 L10.6 1 V9 L6 10 L1.4 11.2 Z M6 .6 V11.4 M.6 7.2 L11.4 5.4" fill="none" stroke="#8a8a8a" stroke-width=".8"/></svg>
<svg style="left:62px;top:34.5px" width="12" height="12" viewBox="0 0 12 12"><path d="M1.6 3.4 L10.2 2.8 V9 L1.6 9.6 Z" fill="none" stroke="#2f6c7d" stroke-width="1.2"/><rect x=".8" y="8.8" width="1.8" height="1.8" fill="#2f6c7d"/><rect x="9.4" y="2" width="1.8" height="1.8" fill="#2f6c7d"/></svg>
<svg style="left:83.5px;top:33.5px" width="12" height="12" viewBox="0 0 12 12"><path d="M1.8 9 A4.2 5.4 0 0 1 10.2 9" fill="none" stroke="#2f6c7d" stroke-width="1.3"/><circle cx="1.8" cy="9" r="1" fill="#2f6c7d"/><circle cx="10.2" cy="9" r="1" fill="#2f6c7d"/><circle cx="6" cy="8.2" r=".8" fill="#2f6c7d"/></svg>
<svg style="left:105px;top:34.5px" width="12" height="12" viewBox="0 0 12 12"><ellipse cx="6" cy="6" rx="5" ry="3.6" transform="rotate(-40 6 6)" fill="none" stroke="#2f6c7d" stroke-width="1.1"/><circle cx="6" cy="6" r="1" fill="#2f6c7d"/></svg>
<svg style="left:126.5px;top:34px" width="12" height="12" viewBox="0 0 12 12"><path d="M1.4 10.8 L6 1 L10.6 10.8 Z M3.6 7.6 H8.4 M6 3.6 V8" fill="none" stroke="#5f8fa8" stroke-width="0.9"/><path d="M1 10.8 H11" stroke="#5f8fa8" stroke-width=".8"/></svg>
<svg style="left:62.5px;top:48.8px" width="12" height="12" viewBox="0 0 12 12"><rect x="1" y="3" width="10" height="6" rx="3" fill="none" stroke="#2f6c7d" stroke-width="1.2"/><path d="M3.6 6 H8.4" stroke="#2f6c7d" stroke-width="1.1"/></svg>
<svg style="left:83.5px;top:48.5px" width="12" height="12" viewBox="0 0 12 12"><path d="M3.6 1.8 H8.4 L10.6 6 L8.4 10.2 H3.6 L1.4 6 Z" fill="none" stroke="#2f6c7d" stroke-width="1.15"/><circle cx="6" cy="6" r="1" fill="#2f6c7d"/></svg>
<svg style="left:105px;top:48.5px" width="12" height="12" viewBox="0 0 12 12"><path d="M1.6 2 H7 Q9.6 2 9.6 5 V10.6" fill="none" stroke="#d2d2d2" stroke-width="1"/></svg>
<svg style="left:126.2px;top:48.3px" width="12" height="12" viewBox="0 0 12 12"><rect x="4.4" y="4.4" width="3.4" height="3.4" fill="#2f6c7d"/><rect x="5.4" y="5.4" width="1.4" height="1.4" fill="#9fc0d0"/></svg>
<svg style="left:147.5px;top:21.5px" width="12" height="12" viewBox="0 0 12 12"><path d="M2 3 H10 M2 8.6 H10 M4.6 1 L7.6 10.6 M7.8 1.4 L5 6" fill="none" stroke="#c9c9c9" stroke-width="1"/></svg>
<svg style="left:173.5px;top:21px" width="12" height="12" viewBox="0 0 12 12"><path d="M1.6 3.6 L6 1.2 L10.4 3.6 V8.4 L6 11 L1.6 8.4 Z" fill="#f8f8f8" stroke="#333" stroke-width=".9"/><path d="M1.6 3.6 L6 5.6 L10.4 3.6 M6 5.6 V11" fill="none" stroke="#333" stroke-width=".8"/><path d="M4.4 4.6 V10" stroke="#2f6c9d" stroke-width="1"/></svg>
<svg style="left:200px;top:25px" width="12" height="12" viewBox="0 0 12 12"><path d="M2 1.6 V9.6 H10.4 M4.6 1.6 V7 H10.4" fill="none" stroke="#c9c9c9" stroke-width="1"/></svg>
<svg style="left:225.5px;top:25px" width="12" height="12" viewBox="0 0 12 12"><path d="M1.4 5.6 L6 1.2 L10.8 4.6 L6.4 9.2 Z" fill="#cfe0ea" stroke="#3d6f86" stroke-width="1"/><path d="M3.4 7.4 L4.4 10.6 L8.6 7" fill="none" stroke="#333" stroke-width=".9"/></svg>
<svg style="left:244px;top:20.5px" width="12" height="12" viewBox="0 0 12 12"><path d="M6 .8 V11.2 M1.2 2.4 L4.4 4 V8 L1.2 9.6 Z M10.8 2.4 L7.6 4 V8 L10.8 9.6 Z" fill="none" stroke="#c9c9c9" stroke-width=".9"/></svg>
<svg style="left:244px;top:34.5px" width="12" height="12" viewBox="0 0 12 12"><circle cx="3.2" cy="3.2" r="2" fill="none" stroke="#c9c9c9" stroke-width="0.9"/><circle cx="8.8" cy="3.2" r="2" fill="none" stroke="#c9c9c9" stroke-width="0.9"/><circle cx="3.2" cy="8.8" r="2" fill="none" stroke="#c9c9c9" stroke-width="0.9"/><circle cx="8.8" cy="8.8" r="2" fill="none" stroke="#c9c9c9" stroke-width="0.9"/></svg>
<svg style="left:244px;top:48.5px" width="12" height="12" viewBox="0 0 12 12"><path d="M1.4 10 L5.4 3 M3.2 2.6 L5.6 2.8 L5.2 5.2" fill="none" stroke="#c9c9c9" stroke-width=".9"/><rect x="6.8" y="3.4" width="4" height="3.6" fill="none" stroke="#c9c9c9" stroke-width="0.9"/></svg>
<svg style="left:355.5px;top:21px" width="12" height="12" viewBox="0 0 12 12"><path d="M5 1 V8 M1.6 8 H8.4" fill="none" stroke="#c9c9c9" stroke-width="1.1"/><circle cx="8.4" cy="8.6" r="1.8" fill="#c9c9c9"/></svg>
<svg style="left:389px;top:25.5px" width="12" height="12" viewBox="0 0 12 12"><path d="M1.6 1.6 H8 V7.6 H1.6 Z M3.4 10 H9.6 M8 3.4 Q10.6 3.4 10.4 5.6" fill="none" stroke="#c9c9c9" stroke-width="1"/></svg>
<svg style="left:413px;top:21.5px" width="12" height="12" viewBox="0 0 12 12"><path d="M1.2 10.6 V1.2 H10.8" fill="none" stroke="#333" stroke-width="1"/><circle cx="6.8" cy="6.6" r="3.6" fill="none" stroke="#2f6c7d" stroke-width="1.1"/><circle cx="6.8" cy="6.6" r="1.1" fill="#333"/></svg>
<svg style="left:433px;top:20.5px" width="12" height="12" viewBox="0 0 12 12"><rect x="1.2" y="1.6" width="8.6" height="8.6" fill="none" stroke="#c9c9c9" stroke-width="0.9"/><path d="M3.4 8.6 L5.4 3.6 L7.4 8.6 M4.2 7 H6.6" fill="none" stroke="#c9c9c9" stroke-width="0.9"/></svg>
<svg style="left:433px;top:34.5px" width="12" height="12" viewBox="0 0 12 12"><rect x="1.2" y="1.6" width="8.6" height="8.6" fill="none" stroke="#c9c9c9" stroke-width="0.9"/><path d="M3.4 8.6 L5.4 3.6 L7.4 8.6 M4.2 7 H6.6" fill="none" stroke="#c9c9c9" stroke-width="0.9"/><path d="M7 1 L10.8 2.6" stroke="#c9c9c9" stroke-width="1"/></svg>
<svg style="left:433px;top:48.3px" width="12" height="12" viewBox="0 0 12 12"><rect x="1.2" y="1.6" width="8.6" height="8.6" fill="none" stroke="#444" stroke-width="0.9"/><path d="M3.4 8.6 L5.4 3.6 L7.4 8.6 M4.2 7 H6.6" fill="none" stroke="#222" stroke-width="0.9"/><path d="M7.4 7.4 L11.4 11.4 M11.4 8 V11.4 H8" fill="none" stroke="#2e9a3e" stroke-width="1.4"/></svg>
<svg style="left:485px;top:20.5px" width="12" height="12" viewBox="0 0 12 12"><rect x="1.2" y="1.6" width="8.6" height="8.6" fill="none" stroke="#c9c9c9" stroke-width="0.9"/><path d="M3.4 8.6 L5.4 3.6 L7.4 8.6 M4.2 7 H6.6" fill="none" stroke="#c9c9c9" stroke-width="0.9"/><path d="M8 9.6 H11.6" stroke="#c9c9c9" stroke-width="1"/></svg>
<svg style="left:485px;top:34.5px" width="12" height="12" viewBox="0 0 12 12"><rect x="1.2" y="1.6" width="8.6" height="8.6" fill="none" stroke="#c9c9c9" stroke-width="0.9"/><path d="M3.4 8.6 L5.4 3.6 L7.4 8.6 M4.2 7 H6.6" fill="none" stroke="#c9c9c9" stroke-width="0.9"/><rect x="5.4" y="5.6" width="5.4" height="5.4" fill="#f4f4f4" stroke="#c9c9c9" stroke-width=".8"/></svg>
<svg style="left:485px;top:48.3px" width="12" height="12" viewBox="0 0 12 12"><rect x="1.2" y="1.6" width="8.6" height="8.6" fill="none" stroke="#c9c9c9" stroke-width="0.9"/><path d="M3.4 8.6 L5.4 3.6 L7.4 8.6 M4.2 7 H6.6" fill="none" stroke="#c9c9c9" stroke-width="0.9"/></svg>
<svg style="left:556px;top:25px" width="12" height="12" viewBox="0 0 12 12"><path d="M2 3.4 L6 1.4 L10 3.4 V8.4 L6 10.6 L2 8.4 Z M2 3.4 L6 5.4 L10 3.4 M6 5.4 V10.6" fill="none" stroke="#c9c9c9" stroke-width=".9"/></svg>
<svg style="left:593.5px;top:21.5px" width="12" height="12" viewBox="0 0 12 12"><path d="M.8 11 V4.2 H4 L5 5.2 H8.4 V6.4 M.8 11 L2.8 6.4 H10.6 L8.6 11 Z" fill="#f8f8f8" stroke="#333" stroke-width=".9"/><path d="M3.6 1.6 L8 .6 L11.2 1.8 L11 5 L8.4 6 L3.8 4.8 Z" fill="#5a9a3a" stroke="#2a5a1a" stroke-width=".6"/><path d="M6 2.2 L8.4 1.8 L8.4 4.2 L6 4.4 Z" fill="#f0c22a" stroke="#7a6410" stroke-width=".4"/><path d="M9 1.8 L10.6 2.4 V4.4 L9 3.8Z" fill="#3f8fd0"/></svg>
<svg style="left:623.5px;top:25px" width="12" height="12" viewBox="0 0 12 12"><path d="M2.4 1.6 L8.6 7.6 Q10 9.4 8.6 10.4 Q7.2 11.2 6 9.8 L1.6 5 Q.6 3.6 1.6 2.4 Q2.6 1.6 3.8 2.8 L8 7.4 M3.8 1.2 L9.6 6.8 Q10.8 8.4 10 9.6" fill="none" stroke="#444" stroke-width=".9"/></svg>
<svg style="left:652px;top:25px" width="12" height="12" viewBox="0 0 12 12"><path d="M1.4 3.8 L6.4 2 L10.8 3.2 V8 L6 10.6 L1.4 8.8 Z" fill="#f0f0f0" stroke="#555" stroke-width=".9"/><path d="M1.4 3.8 L6 5.2 L10.8 3.2 M6 5.2 V10.6" fill="none" stroke="#555" stroke-width=".7"/><path d="M5.4 3 L8.6 2.2 L11.2 3 L10.8 5.4 L7 6 Z" fill="#f0c22a" stroke="#7a6410" stroke-width=".6"/><path d="M6.4 4.2 H9.6 M8.4 3 L9.8 4.2 L8.4 5.4" fill="none" stroke="#222" stroke-width=".9"/></svg>
<svg style="left:692.5px;top:25px" width="12" height="12" viewBox="0 0 12 12"><path d="M4.6 2.2 A3.4 3.4 0 0 1 9.4 3.2" fill="none" stroke="#333" stroke-width=".9"/><path d="M3.4 1.6 L5.4 1.2 L5 3.2 Z M10.4 2.4 L9.8 4.4 L8.4 3 Z" fill="#333"/><path d="M1.2 6.4 Q1.2 4.4 3.2 4.2 L5 4.6 L6 6.2 L5.6 9.6 L3.4 10.8 Q1.2 9.4 1.2 6.4 Z" fill="#f0c22a" stroke="#7a6410" stroke-width=".8"/><path d="M6.4 5.4 L8.8 4.6 L10.8 5.8 V8.8 L8.6 10.2 L6.4 8.8 Z" fill="#f7f1d8" stroke="#9a8a4a" stroke-width=".7"/></svg>
<svg style="left:77.2px;top:25.6225px" width="2.6" height="1.7550000000000001" viewBox="0 0 2.6 1.7550000000000001"><polygon points="0,0 2.6,0 1.3,1.7550000000000001" fill="#2b2b2b"/></svg>
<svg style="left:77.2px;top:39.6225px" width="2.6" height="1.7550000000000001" viewBox="0 0 2.6 1.7550000000000001"><polygon points="0,0 2.6,0 1.3,1.7550000000000001" fill="#2b2b2b"/></svg>
<svg style="left:77.2px;top:53.6225px" width="2.6" height="1.7550000000000001" viewBox="0 0 2.6 1.7550000000000001"><polygon points="0,0 2.6,0 1.3,1.7550000000000001" fill="#2b2b2b"/></svg>
<svg style="left:98.2px;top:25.6225px" width="2.6" height="1.7550000000000001" viewBox="0 0 2.6 1.7550000000000001"><polygon points="0,0 2.6,0 1.3,1.7550000000000001" fill="#2b2b2b"/></svg>
<svg style="left:98.2px;top:39.6225px" width="2.6" height="1.7550000000000001" viewBox="0 0 2.6 1.7550000000000001"><polygon points="0,0 2.6,0 1.3,1.7550000000000001" fill="#2b2b2b"/></svg>
<svg style="left:119.7px;top:25.6225px" width="2.6" height="1.7550000000000001" viewBox="0 0 2.6 1.7550000000000001"><polygon points="0,0 2.6,0 1.3,1.7550000000000001" fill="#2b2b2b"/></svg>
<svg style="left:119.7px;top:39.6225px" width="2.6" height="1.7550000000000001" viewBox="0 0 2.6 1.7550000000000001"><polygon points="0,0 2.6,0 1.3,1.7550000000000001" fill="#2b2b2b"/></svg>
<svg style="left:119.7px;top:53.6225px" width="2.6" height="1.7550000000000001" viewBox="0 0 2.6 1.7550000000000001"><polygon points="0,0 2.6,0 1.3,1.7550000000000001" fill="#b8b8b8"/></svg>
<svg style="left:158px;top:497.7px" width="34" height="28" viewBox="0 0 34 28"><path d="M11 8.4 H22" stroke="#a8281e" stroke-width="1.7"/><path d="M21.2 6.2 L25.2 8.4 L21.2 10.6 Z" fill="#a8281e"/><path d="M12.4 9 L13.4 19" stroke="#2e7a36" stroke-width="1.8"/><path d="M11 18.2 L13.8 22.8 L15.6 17.8 Z" fill="#2e7a36"/><path d="M12 8.4 L7 10.6" stroke="#1a1a6a" stroke-width="2"/><circle cx="6.4" cy="11" r="2" fill="#2222aa"/></svg>
<span class="t " style="left:183.4px;top:501.9px;transform:scaleX(0.875);color:#d98880;font-size:5.5px">X</span>
<span class="t " style="left:170.2px;top:520.0px;transform:scaleX(0.875);color:#a9bfae;font-size:5.5px">Y</span>
<span class="t " style="left:159.0px;top:506.9px;transform:scaleX(0.875);color:#2233aa;font-size:5.5px">Z</span>
<!--/CHROME-->
</body></html>
